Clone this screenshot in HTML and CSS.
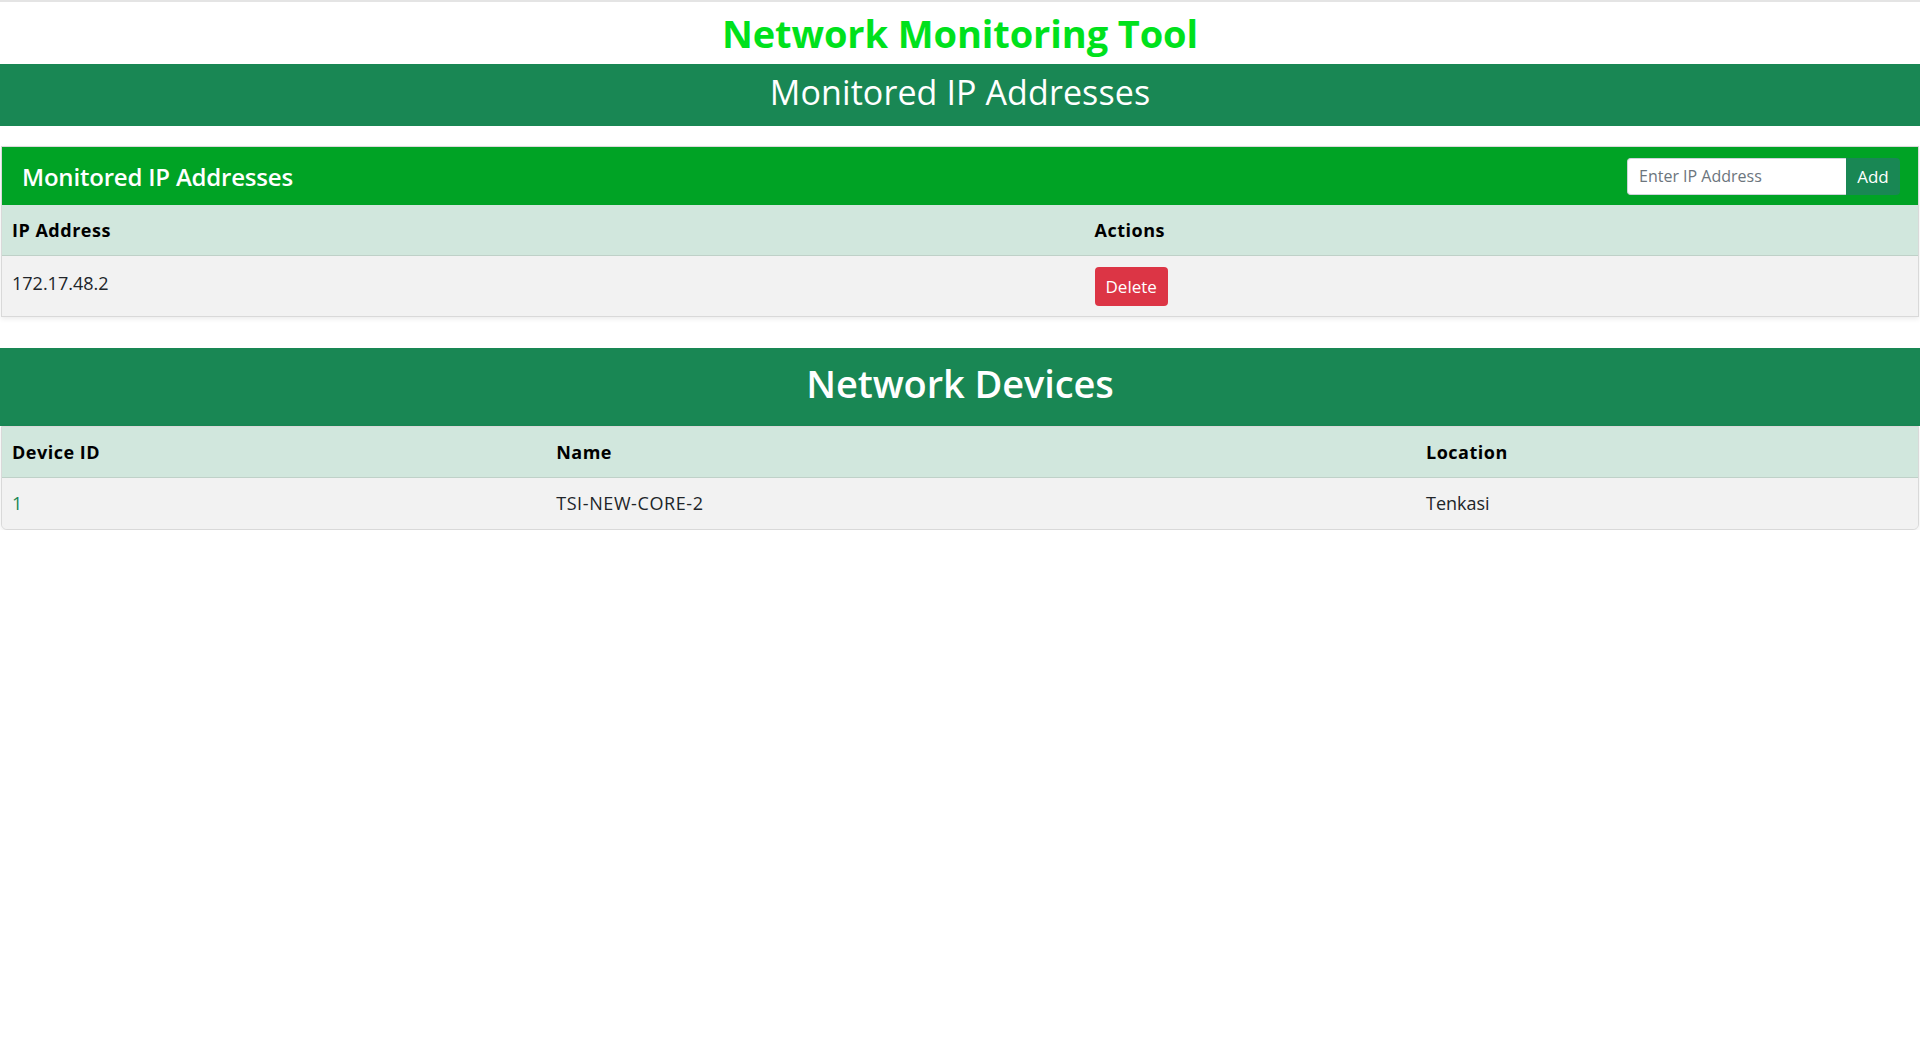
FILE: index.html
```html
<!DOCTYPE html>
<html lang="en">
<head>
<meta charset="utf-8">
<title>Network Monitoring Tool</title>
<link rel="stylesheet" href="styles.css">
</head>
<body>
<div class="topline"></div>
<h1 class="app-title">Network Monitoring Tool</h1>
<div class="banner banner-ip">Monitored IP Addresses</div>

<section class="card ip-card">
  <div class="card-header">
    <h2 class="card-title">Monitored IP Addresses</h2>
    <form class="input-group" onsubmit="return false;">
      <input class="ip-input" type="text" placeholder="Enter IP Address">
      <button class="btn-add" type="submit">Add</button>
    </form>
  </div>
  <table class="data-table ip-table">
    <thead>
      <tr><th class="col-ip">IP Address</th><th>Actions</th></tr>
    </thead>
    <tbody>
      <tr><td class="cell-text">172.17.48.2</td><td class="cell-btn"><button class="btn-delete" type="button">Delete</button></td></tr>
    </tbody>
  </table>
</section>

<div class="banner banner-dev">Network Devices</div>
<section class="card dev-card">
  <table class="data-table dev-table">
    <thead>
      <tr><th class="col-id">Device ID</th><th class="col-name">Name</th><th>Location</th></tr>
    </thead>
    <tbody>
      <tr><td class="dev-id">1</td><td class="dev-name">TSI-NEW-CORE-2</td><td>Tenkasi</td></tr>
    </tbody>
  </table>
</section>
</body>
</html>
```

FILE: styles.css
```css
* { box-sizing: border-box; }

body {
  margin: 0;
  font-family: "Open Sans", "Noto Sans", sans-serif;
  font-size: 18px;
  color: #212529;
  background: #fff;
}

.topline {
  height: 2px;
  background: #e4e4e4;
}

.app-title {
  margin: 7px 0 7px;
  text-align: center;
  font-size: 38px;
  line-height: 48px;
  font-weight: 700;
  color: #00e11c;
  letter-spacing: -0.1px;
}

.banner {
  background: #198754;
  color: #fff;
  text-align: center;
}

.banner-ip {
  height: 62px;
  font-size: 34px;
  line-height: 56px;
  font-weight: 500;
  letter-spacing: 0.1px;
}

.banner-dev {
  margin-top: 31px;
  height: 78px;
  font-size: 38px;
  line-height: 70px;
  font-weight: 600;
  letter-spacing: -0.1px;
}

.card {
  margin: 0 1px;
  border: 1px solid #d9d9d9;
  background: #f2f2f2;
  box-shadow: 0 2px 5px rgba(0, 0, 0, 0.08);
}

.ip-card {
  margin-top: 20px;
}

.dev-card {
  border-radius: 0 0 6px 6px;
  overflow: hidden;
}

.card-header {
  display: flex;
  align-items: center;
  justify-content: space-between;
  height: 58px;
  padding: 0 18px 0 20px;
  background: #00a325;
}

.card-title {
  margin: 0;
  font-size: 24px;
  font-weight: 600;
  color: #fff;
  letter-spacing: -0.2px;
}

.input-group {
  display: flex;
  height: 37px;
  margin: 0;
}

.ip-input {
  width: 219px;
  height: 37px;
  border: 1px solid #ced4da;
  border-right: none;
  border-radius: 4px 0 0 4px;
  padding: 0 11px;
  font-family: inherit;
  font-size: 16px;
  color: #212529;
  background: #fff;
  outline: none;
}

.ip-input::placeholder {
  color: #6c757d;
}

.btn-add {
  width: 54px;
  height: 37px;
  border: none;
  border-radius: 0 4px 4px 0;
  background: #198754;
  color: #fff;
  font-family: inherit;
  font-size: 17px;
  padding: 0;
}

.data-table {
  width: 100%;
  border-collapse: collapse;
}

.data-table th {
  text-align: left;
  font-weight: 700;
  color: #000;
  background: #d1e7dd;
  padding: 12px 12px 11px 10px;
  line-height: 27px;
  letter-spacing: 0.5px;
  border-bottom: 1px solid #bfd1c8;
}

.data-table td {
  vertical-align: top;
  padding: 12px 12px 12px 10px;
  line-height: 27px;
  background: #f2f2f2;
}

.ip-table td.cell-text {
  padding-top: 14px;
  padding-bottom: 10px;
}

.ip-table td.cell-btn {
  padding-top: 11px;
  padding-bottom: 10px;
}

.ip-table .col-ip { width: 56.5%; }
.dev-table .col-id { width: 28.4%; }
.dev-table .col-name { width: 45.4%; }

.dev-id {
  color: #198754;
}

.dev-name {
  letter-spacing: 0.6px;
}

.btn-delete {
  display: block;
  height: 39px;
  padding: 0 11px;
  border: none;
  border-radius: 4px;
  background: #dc3545;
  color: #fff;
  font-family: inherit;
  font-size: 17px;
}
```
